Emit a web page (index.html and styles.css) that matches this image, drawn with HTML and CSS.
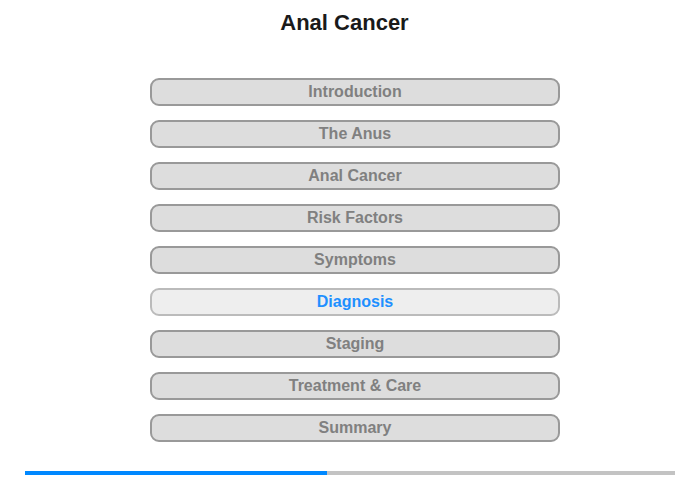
FILE: index.html
```html
<!DOCTYPE html>
<html>
<head>
<meta charset="utf-8">
<link rel="stylesheet" href="styles.css">
</head>
<body>
<div class="page">
  <h1 class="title">Anal Cancer</h1>
  <nav class="menu">
    <div class="item">Introduction</div>
    <div class="item">The Anus</div>
    <div class="item">Anal Cancer</div>
    <div class="item">Risk Factors</div>
    <div class="item">Symptoms</div>
    <div class="item active">Diagnosis</div>
    <div class="item">Staging</div>
    <div class="item">Treatment &amp; Care</div>
    <div class="item">Summary</div>
  </nav>
  <div class="progress"><div class="progress-fill" style="width:302px"></div></div>
</div>
</body>
</html>
```
FILE: styles.css
```css
html, body {
  margin: 0;
  padding: 0;
  background: #ffffff;
}
.page {
  width: 700px;
  height: 480px;
  font-family: "Liberation Sans", Arial, sans-serif;
  display: flex;
  flex-direction: column;
  align-items: center;
}
.title {
  margin: 0;
  padding-top: 10px;
  padding-right: 11px;
  font-size: 22px;
  line-height: 26px;
  font-weight: bold;
  color: #1a1a1a;
  text-align: center;
}
.menu {
  margin-top: 42px;
  margin-left: 10px;
  display: flex;
  flex-direction: column;
  gap: 14px;
}
.item {
  box-sizing: border-box;
  width: 410px;
  height: 28px;
  border: 2px solid #999999;
  border-radius: 9px;
  background: #dddddd;
  color: #808080;
  font-size: 16px;
  font-weight: bold;
  line-height: 24px;
  text-align: center;
}
.item.active {
  background: #eeeeee;
  border-color: #bbbbbb;
  color: #1e90ff;
}
.progress {
  margin-top: 29px;
  width: 650px;
  height: 4px;
  background: #c3c3c3;
  display: flex;
}
.progress-fill {
  height: 100%;
  background: #0088ff;
}
```
